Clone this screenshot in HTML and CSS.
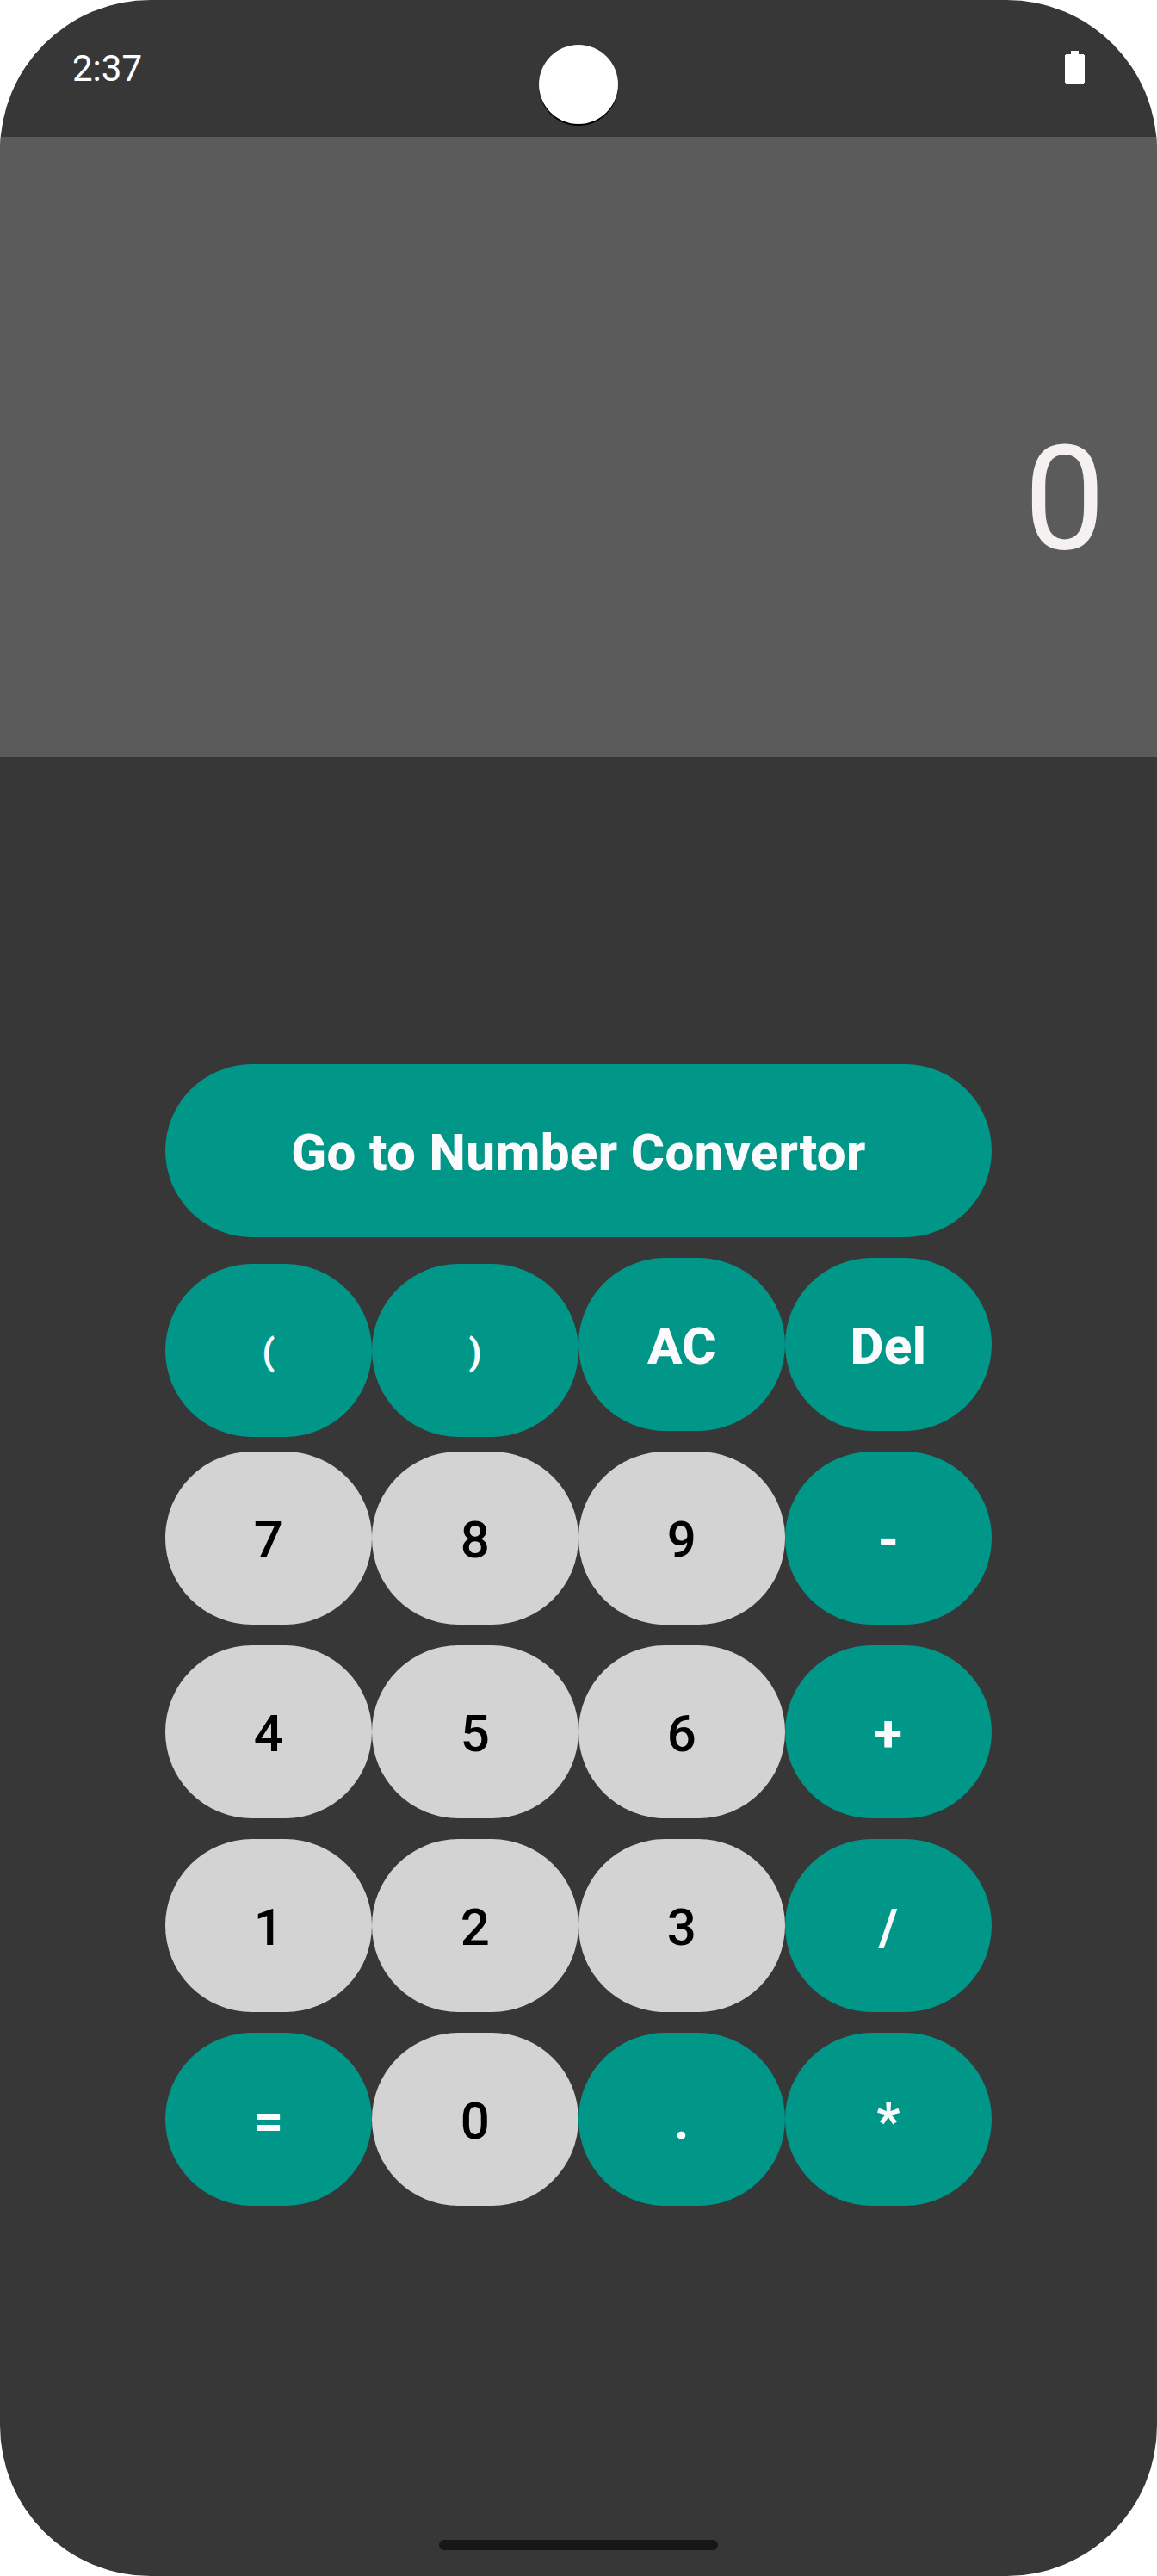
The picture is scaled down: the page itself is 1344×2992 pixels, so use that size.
FILE: index.html
```
<!DOCTYPE html>
<html lang="en">
<head>
<meta charset="utf-8">
<title>Calculator</title>
<link rel="stylesheet" href="styles.css">
</head>
<body>
<main class="screen">
  <header class="status">
    <span class="clock">2:37</span>
    <svg class="battery" width="23" height="38" viewBox="0 0 23 38" aria-hidden="true"><path fill="#fff" d="M7 0h9v4h6v1h1v32h-1v1H1v-1H0V5h1V4h6z"/></svg>
    <span class="camera"></span>
  </header>
  <section class="display"><output class="result">0</output></section>
  <section class="keypad">
    <button class="key op wide">Go to Number Convertor</button>
    <button class="key op small">(</button>
    <button class="key op small">)</button>
    <button class="key op">AC</button>
    <button class="key op">Del</button>
    <button class="key">7</button>
    <button class="key">8</button>
    <button class="key">9</button>
    <button class="key op">-</button>
    <button class="key">4</button>
    <button class="key">5</button>
    <button class="key">6</button>
    <button class="key op">+</button>
    <button class="key">1</button>
    <button class="key">2</button>
    <button class="key">3</button>
    <button class="key op symbol">/</button>
    <button class="key op">=</button>
    <button class="key">0</button>
    <button class="key op symbol">.</button>
    <button class="key op symbol">*</button>
  </section>
  <footer class="nav"><span class="handle"></span></footer>
</main>
</body>
</html>
```

FILE: styles.css
```
* { box-sizing: border-box; }
body { margin: 0; background: #fff; font-family: Roboto, sans-serif; }
.screen {
  position: relative;
  display: flex;
  flex-direction: column;
  width: 1344px;
  height: 2992px;
  overflow: hidden;
  border-radius: 175px;
  background: #373737;
}
.status {
  display: flex;
  align-items: center;
  justify-content: space-between;
  height: 159px;
  padding: 0 84px;
}
.clock { font-size: 42px; line-height: 48px; color: #fff; }
.battery { display: block; margin-bottom: 3px; }
.camera {
  position: absolute;
  left: 626px;
  top: 52px;
  width: 92px;
  height: 92px;
  border-radius: 50%;
  background: #fff;
  box-shadow: 0 1px 0 #000, 0 2px 0 #000;
}
.display {
  display: flex;
  align-items: center;
  justify-content: flex-end;
  height: 720px;
  padding: 122px 60px 0 0;
  background: #5b5b5b;
}
.result { font-size: 168px; line-height: 196px; color: #f5f1f1; }
.keypad {
  display: grid;
  grid-template-columns: repeat(4, 240px);
  grid-auto-rows: 201px;
  row-gap: 24px;
  justify-content: center;
  margin-top: 357px;
}
.key {
  padding: 5px 0 0;
  border: 0;
  border-radius: 101px;
  background: #d3d3d3;
  color: #000;
  font: 500 60px/70px Roboto, sans-serif;
  letter-spacing: 0.4px;
}
.op { background: #009688; color: #fbfbfe; font-weight: 800; }
.wide { grid-column: span 4; }
.small { margin: 7px 0 -7px; font-size: 42px; font-weight: 800; }
.symbol { font-weight: 700; }
.nav { display: flex; justify-content: center; margin-top: auto; padding-bottom: 30px; }
.handle { width: 324px; height: 12px; border-radius: 6px; background: #171717; }
```
